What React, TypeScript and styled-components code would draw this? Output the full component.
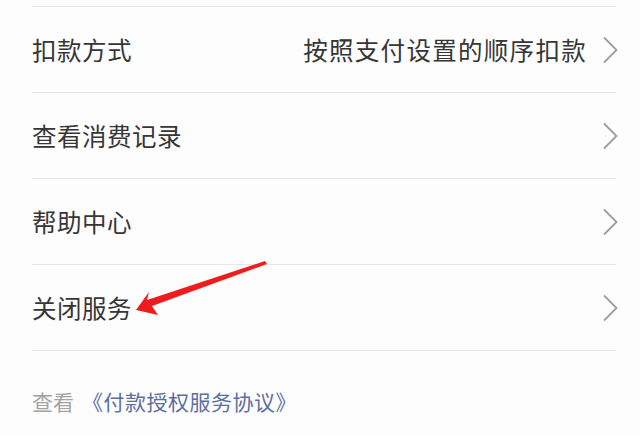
import React from "react";
import styled, { createGlobalStyle } from "styled-components";

const GlobalStyle = createGlobalStyle`
  html, body {
    margin: 0;
    padding: 0;
    background: #fdfdfd;
  }
  body {
    font-family: "Noto Sans CJK SC", "Noto Sans", sans-serif;
  }
`;

const Page = styled.div`
  position: relative;
  width: 640px;
  height: 435px;
  overflow: hidden;
  background: #fdfdfd;
`;

const List = styled.div`
  display: flex;
  flex-direction: column;
  padding-left: 32px;
  padding-right: 24px;
`;

const TopEdge = styled.div`
  height: 6px;
  border-bottom: 1.5px solid #e6e6e6;
`;

const Row = styled.div`
  display: flex;
  align-items: center;
  height: 85px;
  border-bottom: 1.5px solid #e6e6e6;
`;

const Label = styled.span`
  flex: 1;
  font-size: 24.5px;
  color: #363636;
  letter-spacing: 0.5px;
`;

const Value = styled.span`
  font-size: 24.5px;
  color: #363636;
  letter-spacing: 1.3px;
  margin-right: 15px;
`;

const Chevron = styled.svg`
  width: 16px;
  height: 28px;
  flex: none;
  margin-right: -2px;
`;

const Footer = styled.div`
  display: flex;
  align-items: center;
  padding: 35px 0 0 32px;
  font-size: 21px;
`;

const Muted = styled.span`
  color: #a3a3a3;
  margin-right: 8px;
`;

const Link = styled.span`
  color: #5b6f9f;
  letter-spacing: 0.5px;
`;

const Arrow = styled.svg`
  position: absolute;
  left: 0;
  top: 0;
  width: 640px;
  height: 435px;
  pointer-events: none;
`;

function ChevronIcon() {
  return (
    <Chevron viewBox="0 0 16 28">
      <polyline
        points="2,1.5 14.5,14 2,26.5"
        fill="none"
        stroke="#9d9d9d"
        strokeWidth="1.8"
      />
    </Chevron>
  );
}

const rows = [
  { label: "扣款方式", value: "按照支付设置的顺序扣款" },
  { label: "查看消费记录" },
  { label: "帮助中心" },
  { label: "关闭服务" },
];

export default function App() {
  return (
    <Page>
      <GlobalStyle />
      <List>
        <TopEdge />
        {rows.map((r) => (
          <Row key={r.label}>
            <Label>{r.label}</Label>
            {r.value && <Value>{r.value}</Value>}
            <ChevronIcon />
          </Row>
        ))}
      </List>
      <Footer>
        <Muted>查看</Muted>
        <Link>《付款授权服务协议》</Link>
      </Footer>
      <Arrow viewBox="0 0 640 435">
        <polygon
          points="265,261 267,264 152,306 158,315 136,310 149,292 147,300"
          fill="#ee1c1c"
        />
      </Arrow>
    </Page>
  );
}
